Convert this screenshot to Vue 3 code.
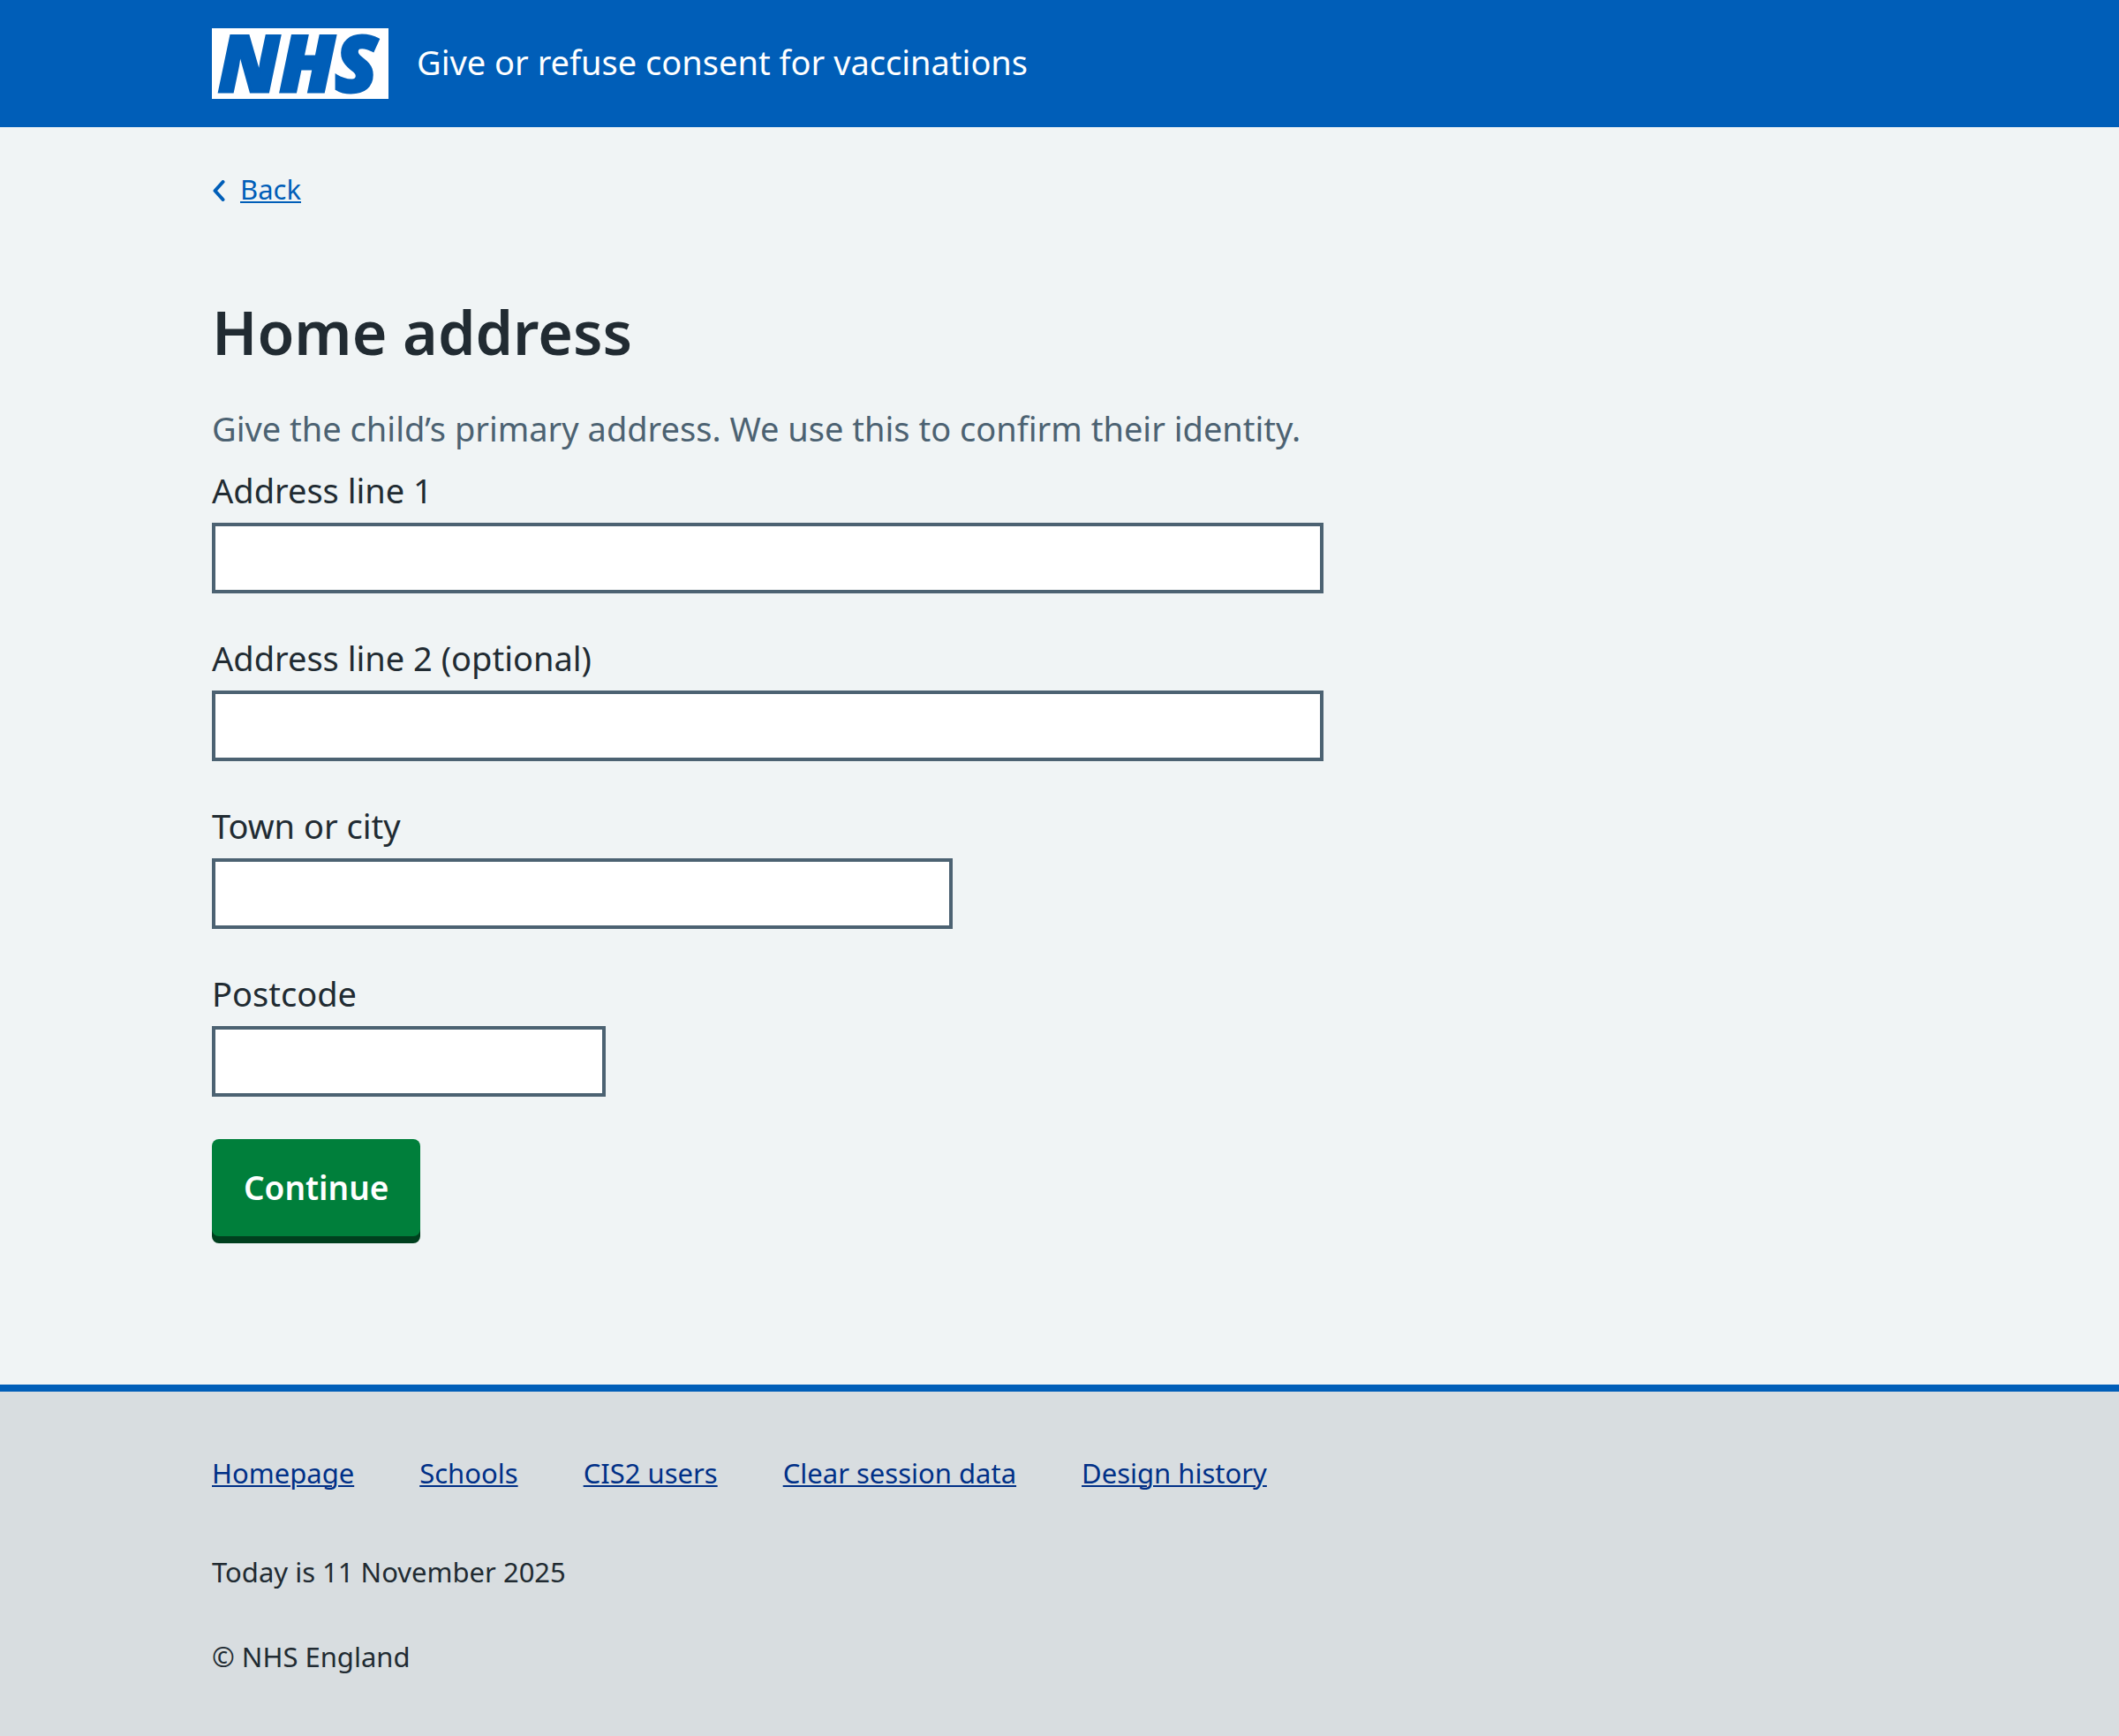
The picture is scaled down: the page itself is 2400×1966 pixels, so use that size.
<script setup>
import { reactive } from 'vue'

const fields = [
  { id: 'address-line-1', label: 'Address line 1', size: 'full', autocomplete: 'address-line1' },
  { id: 'address-line-2', label: 'Address line 2 (optional)', size: 'full', autocomplete: 'address-line2' },
  { id: 'town', label: 'Town or city', size: 'two-thirds', autocomplete: 'address-level2' },
  { id: 'postcode', label: 'Postcode', size: 'short', autocomplete: 'postal-code' },
]

const address = reactive({})

const footerLinks = ['Homepage', 'Schools', 'CIS2 users', 'Clear session data', 'Design history']
</script>

<template>
  <div class="page">
    <header class="header">
      <div class="container header-row">
        <a class="logo-link" href="#" aria-label="NHS">
          <svg class="logo" viewBox="0 0 200 80" aria-hidden="true">
            <rect width="200" height="80" fill="#fff" />
            <text class="logo-text" x="7" y="72">NHS</text>
          </svg>
        </a>
        <a class="service-name" href="#">Give or refuse consent for vaccinations</a>
      </div>
    </header>

    <div class="container body">
      <nav class="back">
        <svg class="chevron" viewBox="0 0 16 24" aria-hidden="true">
          <path d="M12.500 2 L3.500 12 L12.500 22" />
        </svg>
        <a class="back-link" href="#">Back</a>
      </nav>

      <main class="grid">
        <form class="column" @submit.prevent>
          <fieldset class="fieldset" aria-describedby="address-hint">
            <legend class="legend"><h1 class="heading">Home address</h1></legend>
            <p id="address-hint" class="hint">
              Give the child’s primary address. We use this to confirm their identity.
            </p>
            <div class="fields">
              <div v-for="field in fields" :key="field.id" class="field">
                <label class="label" :for="field.id">{{ field.label }}</label>
                <input
                  :id="field.id"
                  v-model="address[field.id]"
                  class="input"
                  :class="field.size"
                  type="text"
                  :autocomplete="field.autocomplete"
                />
              </div>
            </div>
          </fieldset>
          <button class="button" type="submit">Continue</button>
        </form>
      </main>
    </div>

    <footer class="footer">
      <div class="container">
        <ul class="footer-links">
          <li v-for="link in footerLinks" :key="link"><a href="#">{{ link }}</a></li>
        </ul>
        <p class="today">Today is 11 November 2025</p>
        <p class="copyright">© NHS England</p>
      </div>
    </footer>
  </div>
</template>

<style>
body {
  background: #d8dde0;
}
</style>

<style scoped>
.page {
  display: flex;
  flex-direction: column;
  min-height: 100vh;
  background: #f0f4f5;
  color: #212b32;
  font-family: "Noto Sans", "Open Sans", sans-serif;
  font-size: 38px;
  line-height: 58px;
}

.container {
  box-sizing: border-box;
  width: 100%;
  max-width: 2048px;
  margin: 0 auto;
  padding: 0 64px;
}

.header {
  padding: 32px 0;
  background: #005eb8;
}

.header-row {
  display: flex;
  align-items: center;
  gap: 32px;
}

.logo-link {
  display: block;
}

.logo {
  display: block;
  width: 200px;
  height: 80px;
  overflow: visible;
}

.logo-text {
  fill: #005eb8;
  stroke: #005eb8;
  stroke-width: 3;
  font-family: "Open Sans", "Noto Sans", sans-serif;
  font-size: 88px;
  font-style: italic;
  font-weight: 800;
}

.service-name {
  padding-bottom: 4px;
  color: #fff;
  text-decoration: none;
}

.container.body {
  padding-top: 44px;
  padding-bottom: 160px;
}

.back {
  display: flex;
  align-items: center;
  gap: 16px;
  font-size: 31px;
  line-height: 52px;
}

.chevron {
  width: 16px;
  height: 24px;
  margin-top: 4px;
  fill: none;
  stroke: #005eb8;
  stroke-width: 4;
  stroke-linecap: round;
  stroke-linejoin: round;
}

.back-link {
  color: #005eb8;
  text-decoration-thickness: 2px;
  text-underline-offset: 2px;
}

.grid {
  display: grid;
  grid-template-columns: repeat(3, 1fr);
  column-gap: 64px;
  margin-top: 96px;
}

.column {
  grid-column: span 2;
}

.fieldset {
  min-width: 0;
  margin: 0;
  padding: 0;
  border: 0;
}

.legend {
  padding: 0;
}

.heading {
  margin: 0 0 40px;
  font-size: 68px;
  font-weight: 600;
  line-height: 80px;
}

.hint {
  margin: 0 0 12px;
  color: #4c6272;
}

.fields {
  display: flex;
  flex-direction: column;
  gap: 44px;
}

.field {
  display: flex;
  flex-direction: column;
  align-items: flex-start;
  gap: 8px;
}

.input {
  box-sizing: border-box;
  height: 80px;
  padding: 8px;
  border: 4px solid #4c6272;
  border-radius: 0;
  background: #fff;
  color: inherit;
  font: inherit;
}

.full {
  width: 100%;
}

.two-thirds {
  width: calc(100% * 2 / 3);
}

.short {
  width: 446px;
  max-width: 100%;
}

.button {
  display: block;
  margin: 48px 0 8px;
  padding: 26px 36px;
  border: 0;
  border-radius: 8px;
  background: #007f3b;
  box-shadow: 0 8px 0 #00401e;
  color: #fff;
  font-family: inherit;
  font-size: 37px;
  font-weight: 600;
  line-height: 58px;
  cursor: pointer;
}

.footer {
  flex: 1;
  padding: 64px 0 60px;
  border-top: 8px solid #005eb8;
  background: #d8dde0;
  font-size: 31px;
  line-height: 56px;
}

.footer-links {
  display: flex;
  flex-wrap: wrap;
  column-gap: 74px;
  margin: 0 0 56px;
  padding: 0;
  list-style: none;
}

.footer-links a {
  color: #003087;
  text-decoration-thickness: 2px;
  text-underline-offset: 2px;
}

.today {
  margin: 0 0 40px;
}

.copyright {
  margin: 0;
}
</style>
